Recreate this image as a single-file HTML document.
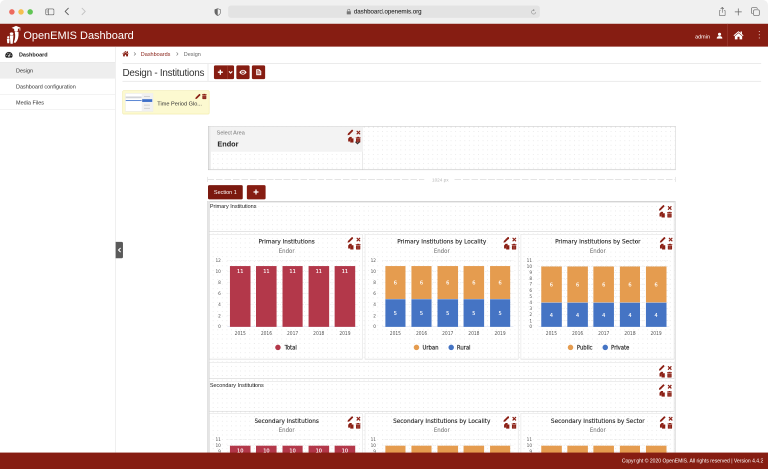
<!DOCTYPE html>
<html><head><meta charset="utf-8"><title>OpenEMIS Dashboard</title>
<style>
html,body{margin:0;padding:0;background:#fff;overflow:hidden}
body{width:768px;height:469px;position:relative;font-family:"Liberation Sans",Arial,sans-serif}
#outer{position:absolute;left:0;top:0;width:1536px;height:938px;transform:scale(0.5);transform-origin:0 0;will-change:transform;overflow:hidden;background:#fff}
#root{position:absolute;left:0;top:0;width:1680px;height:1026px;transform:scale(0.91428571);transform-origin:0 0;overflow:hidden;background:#fff;color:#333}
#root div,#root span{box-sizing:border-box}
.abs{position:absolute}
.w{position:absolute;border:1px solid #dadada;border-bottom-color:#c6c6c6;overflow:hidden}
.dots{background-image:radial-gradient(circle,#e8e8e8 0.8px,rgba(255,255,255,0) 1.25px);background-size:10px 10px;background-position:5px 5px}
.ct{position:absolute;left:0;right:0;text-align:center;font-family:'DejaVu Sans Condensed','DejaVu Sans','Liberation Sans',sans-serif;font-size:14px;color:#222;white-space:nowrap;-webkit-text-stroke:0.25px #222}
.cs{position:absolute;left:0;right:0;text-align:center;font-family:'DejaVu Sans Condensed','DejaVu Sans','Liberation Sans',sans-serif;font-size:13.200px;color:#666;white-space:nowrap}
.yl{position:absolute;left:0;text-align:right;font-family:'DejaVu Sans Condensed','DejaVu Sans','Liberation Sans',sans-serif;font-size:10.4px;color:#555;line-height:14px}
.xl{position:absolute;text-align:center;font-family:'DejaVu Sans Condensed','DejaVu Sans','Liberation Sans',sans-serif;font-size:10.7px;color:#555;line-height:14px}
.dl{position:absolute;text-align:center;font-family:'DejaVu Sans Condensed','DejaVu Sans','Liberation Sans',sans-serif;font-size:12.200px;color:#fff;line-height:14px;-webkit-text-stroke:0.250px #fff}
.lg{position:absolute;font-family:'DejaVu Sans Condensed','DejaVu Sans','Liberation Sans',sans-serif;font-size:13px;letter-spacing:-0.100px;-webkit-text-stroke:0.450px #333;color:#333;line-height:16px;white-space:nowrap}
.tw{font-size:12px;color:#222;padding:1px 1.500px;line-height:14px}
.btn{position:absolute;background:#861d12;border-radius:3px;color:#fff}
.sidet{position:absolute;font-size:12px;line-height:14px;color:#333;white-space:nowrap}
</style></head><body><div id="outer"><div id="root">

<div class="abs" style="left:0;top:0;width:1680px;height:52px;background:#f0f0f0;border-bottom:1px solid #d4d4d4;border-radius:11px 11px 0 0"></div>
<div class="abs" style="left:20px;top:20px;width:12.200px;height:12.200px;border-radius:6.100px;background:#ed6a5e"></div>
<div class="abs" style="left:40px;top:20px;width:12.200px;height:12.200px;border-radius:6.100px;background:#f5bf4f"></div>
<div class="abs" style="left:60px;top:20px;width:12.200px;height:12.200px;border-radius:6.100px;background:#61c554"></div>
<svg class="abs" style="left:98.500px;top:17.500px" width="20" height="16" viewBox="0 0 20 16"><rect x="1" y="1.5" width="18" height="13" rx="2.5" fill="none" stroke="#5e5e5e" stroke-width="1.4"/><path d="M7.2 1.5V14.5" stroke="#5e5e5e" stroke-width="1.4"/><path d="M3 5h2.4M3 7.5h2.4M3 10h2.4" stroke="#5e5e5e" stroke-width="1"/></svg>
<svg class="abs" style="left:140px;top:16px" width="12" height="18" viewBox="0 0 12 18"><path d="M9.5 2 L2.5 9 L9.5 16" fill="none" stroke="#5e5e5e" stroke-width="2" stroke-linecap="round" stroke-linejoin="round"/></svg>
<svg class="abs" style="left:177px;top:16px" width="12" height="18" viewBox="0 0 12 18"><path d="M2.5 2 L9.5 9 L2.5 16" fill="none" stroke="#c2c2c2" stroke-width="2" stroke-linecap="round" stroke-linejoin="round"/></svg>
<svg class="abs" style="left:469px;top:17.500px" width="14.500" height="17" viewBox="0 0 16 19"><path d="M8 1 L15 3.5 V9 Q15 15 8 18 Q1 15 1 9 V3.5 Z" fill="none" stroke="#666" stroke-width="1.5"/><path d="M8 1 L1 3.5 V9 Q1 15 8 18 Z" fill="#666"/></svg>
<div class="abs" style="left:499px;top:12px;width:682px;height:27px;border-radius:6px;background:#e3e3e3"></div>
<svg class="abs" style="left:758px;top:19px" width="10" height="13" viewBox="0 0 10 13"><rect x="0.5" y="5.5" width="9" height="7" rx="1" fill="#777"/><path d="M2.5 5.5V3.6Q2.5 1 5 1Q7.5 1 7.5 3.6V5.5" fill="none" stroke="#777" stroke-width="1.3"/></svg>
<div class="abs" style="left:774px;top:17px;font-size:13.4px;line-height:17px;color:#262626;white-space:nowrap;-webkit-text-stroke:0.2px #262626">dashboard.openemis.org</div>
<svg class="abs" style="left:1161px;top:18.500px" width="13" height="14" viewBox="0 0 16 17"><path d="M13.2 9.2 A5.4 5.4 0 1 1 8 3.6" fill="none" stroke="#777" stroke-width="1.3"/><path d="M7.2 0.8 L10.6 3.6 L7.2 6.4 Z" fill="#777"/></svg>
<svg class="abs" style="left:1571px;top:14px" width="18" height="23" viewBox="0 0 20 26"><path d="M6 9.5H4.5Q3 9.5 3 11V21.5Q3 23 4.5 23H15.5Q17 23 17 21.5V11Q17 9.5 15.5 9.5H14" fill="none" stroke="#666" stroke-width="1.5"/><path d="M10 15V2.5M6.3 5.8L10 2.2L13.7 5.8" fill="none" stroke="#666" stroke-width="1.5" stroke-linecap="round" stroke-linejoin="round"/></svg>
<svg class="abs" style="left:1606px;top:17px" width="18" height="18" viewBox="0 0 18 18"><path d="M9 2V16M2 9H16" stroke="#666" stroke-width="1.6" stroke-linecap="round"/></svg>
<svg class="abs" style="left:1642px;top:15px" width="21" height="21" viewBox="0 0 21 21"><rect x="6.5" y="6.5" width="12.5" height="12.5" rx="2.5" fill="#f0f0f0" stroke="#666" stroke-width="1.5"/><path d="M4.5 14.5H4Q1.8 14.5 1.8 12.3V4Q1.8 1.8 4 1.8H12.3Q14.5 1.8 14.5 4V4.5" fill="none" stroke="#666" stroke-width="1.5"/></svg>

<div class="abs" style="left:0;top:52px;width:1680px;height:50px;background:#861d12"></div>
<svg class="abs" style="left:13px;top:55px" width="33" height="42" viewBox="0 0 33 42">
<g fill="#fff">
<circle cx="5" cy="26.6" r="2.5"/><path d="M2 29.800H8L7 39.600H3Z"/>
<ellipse cx="12.3" cy="18.8" rx="3.9" ry="2.900"/><path d="M8.400 22.400H16.400L14.800 40.800H10Z"/>
<path d="M12.500 6L22 1.500L31.800 5.600L22 10.200Z"/><path d="M30.600 5.600V12" stroke="#fff" stroke-width="1.600"/>
<path d="M18 8.500H26.200V10.500Q26.200 14.400 22.100 14.400Q18 14.400 18 10.500Z"/>
<path d="M19.300 14.600L27.400 14.600Q28.800 31 20.600 38.800L17 38Q22 28 19.300 14.600Z"/>
</g></svg>
<div class="abs" style="left:51px;top:62px;font-size:24px;line-height:30px;color:#fff;white-space:nowrap">OpenEMIS Dashboard</div>
<div class="abs" style="left:1520.500px;top:71.500px;font-size:12px;line-height:16px;color:#fff">admin</div>
<svg class="abs" style="left:1567px;top:71px" width="14" height="14" viewBox="0 0 14 14"><circle cx="7" cy="4" r="3.4" fill="#fff"/><path d="M0.8 13.5Q0.8 8 7 8Q13.2 8 13.2 13.5Z" fill="#fff"/></svg>
<div class="abs" style="left:1591px;top:52px;width:1px;height:50px;background:#a34a40"></div>
<svg class="abs" style="left:1604px;top:67px" width="23" height="20" viewBox="0 0 23 20"><path d="M11.5 1L0.5 10.5L2 12L11.5 3.8L21 12L22.500 10.5L19 7.500V2H16V4.900Z" fill="#fff"/><path d="M11.5 5.500L3.500 12.400V19H9.300V13.500H13.700V19H19.500V12.400Z" fill="#fff"/></svg>
<div class="abs" style="left:1659.500px;top:67.5px;width:2.400px;height:2.400px;background:#fff;opacity:.85"></div>
<div class="abs" style="left:1659.500px;top:74.5px;width:2.400px;height:2.400px;background:#fff;opacity:.85"></div>
<div class="abs" style="left:1659.500px;top:81.5px;width:2.400px;height:2.400px;background:#fff;opacity:.85"></div>

<div class="abs" style="left:252px;top:102px;width:1px;height:888px;background:#dcdcdc"></div>
<div class="abs" style="left:0;top:136px;width:252px;height:36px;background:#eee"></div>
<div class="abs" style="left:0;top:136px;width:252px;height:1px;background:#e4e4e4"></div>
<div class="abs" style="left:0;top:205.500px;width:252px;height:1px;background:#e4e4e4"></div>
<div class="abs" style="left:0;top:239px;width:252px;height:1px;background:#e4e4e4"></div>
<div class="sidet" style="left:41.500px;top:113px;font-weight:bold;color:#222">Dashboard</div>
<svg class="abs" style="left:11px;top:113px" width="17" height="14" viewBox="0 0 17 14"><path d="M8.5 0.5A8 8 0 0 0 1.200 11.800Q1.600 13 2.800 13H14.200Q15.400 13 15.800 11.800A8 8 0 0 0 8.500 0.500Z" fill="#222"/><circle cx="8.5" cy="9.3" r="1.8" fill="#fff"/><path d="M8.5 9.300L11.800 4.200" stroke="#fff" stroke-width="1.400"/><circle cx="3.800" cy="8.500" r="1" fill="#fff"/><circle cx="5" cy="4.800" r="1" fill="#fff"/><circle cx="8.500" cy="3.300" r="1" fill="#fff"/><circle cx="13.200" cy="8.500" r="1" fill="#fff"/></svg>
<div class="sidet" style="left:35px;top:148.300px">Design</div>
<div class="sidet" style="left:35px;top:183.300px">Dashboard configuration</div>
<div class="sidet" style="left:35px;top:217.600px">Media Files</div>
<div class="abs" style="left:253px;top:529px;width:16px;height:35.500px;background:#5a5a5a;border-radius:0 3px 3px 0"></div>
<svg class="abs" style="left:256.500px;top:540.500px" width="9" height="12" viewBox="0 0 9 12"><path d="M6.800 1.500L2.300 6L6.800 10.500" fill="none" stroke="#fff" stroke-width="2.300"/></svg>


<svg class="abs" style="left:267px;top:111px" width="15" height="13" viewBox="0 0 23 20"><path d="M11.5 1L0.5 10.5L2 12L11.5 3.8L21 12L22.500 10.5L19 7.500V2H16V4.900Z" fill="#861d12"/><path d="M11.5 5.500L3.500 12.400V19H9.300V13.500H13.700V19H19.500V12.400Z" fill="#861d12"/></svg>
<svg class="abs" style="left:292px;top:114px" width="5.600" height="8" viewBox="0 0 7 10"><path d="M1.400 0.800L5.800 5L1.400 9.200" fill="none" stroke="#777" stroke-width="1.700"/></svg>
<div class="abs" style="left:308px;top:111px;font-size:12px;line-height:14px;color:#861d12">Dashboards</div>
<svg class="abs" style="left:384.500px;top:114px" width="5.600" height="8" viewBox="0 0 7 10"><path d="M1.400 0.800L5.800 5L1.400 9.200" fill="none" stroke="#777" stroke-width="1.700"/></svg>
<div class="abs" style="left:402px;top:111px;font-size:12px;line-height:14px;color:#666">Design</div>
<div class="abs" style="left:268px;top:138px;width:1397px;height:2px;background:#e9e9e9"></div>
<div class="abs" style="left:268px;top:177.300px;width:1397px;height:2px;background:#e9e9e9"></div>
<div class="abs" style="left:268px;top:146px;font-size:21.600px;letter-spacing:-0.520px;line-height:26px;color:#333;white-space:nowrap">Design - Institutions</div>
<div class="abs" style="left:453.500px;top:139px;width:2px;height:39px;background:#e9e9e9"></div>
<div class="btn" style="left:468px;top:143px;width:44px;height:30px"></div>
<div class="abs" style="left:496.500px;top:143px;width:1px;height:30px;background:#a8483d"></div>
<svg class="abs" style="left:476px;top:152px" width="12" height="12" viewBox="0 0 12 12"><path d="M6 0.500V11.500M0.500 6H11.500" stroke="#fff" stroke-width="3"/></svg>
<svg class="abs" style="left:500px;top:155px" width="9" height="7" viewBox="0 0 9 7"><path d="M0.800 1.200L4.500 4.900L8.200 1.200" fill="none" stroke="#fff" stroke-width="2.400"/></svg>
<div class="btn" style="left:517px;top:143px;width:29px;height:30px"></div>
<svg class="abs" style="left:523px;top:152px" width="17" height="12" viewBox="0 0 17 12"><path d="M0.500 6Q4 0.800 8.500 0.800Q13 0.800 16.500 6Q13 11.200 8.500 11.200Q4 11.200 0.500 6Z" fill="#fff"/><circle cx="8.500" cy="6" r="3.600" fill="#861d12"/><circle cx="8.500" cy="6" r="1.700" fill="#fff"/></svg>
<div class="btn" style="left:551px;top:143px;width:29px;height:30px"></div>
<svg class="abs" style="left:560px;top:151px" width="12" height="14" viewBox="0 0 12 14"><path d="M0.500 0.500H7.500L11.500 4.500V13.500H0.500Z" fill="#fff"/><path d="M2.500 6H9.500M2.500 8.300H9.500M2.500 10.600H9.500M2.500 3.600H6" stroke="#861d12" stroke-width="1.200"/></svg>

<div class="abs" style="left:268px;top:197.500px;width:190px;height:52.500px;background:#fcf9d0;border:1px solid #ebe38c;border-radius:2px"></div>
<div class="abs" style="left:274px;top:204px;width:60.500px;height:40px;background:#fff;border:1px solid #e4e4e4"></div>
<div class="abs" style="left:275px;top:211px;width:35px;height:4px;background:#d2d4d8"></div>
<div class="abs" style="left:275px;top:219px;width:35px;height:1.600px;background:#4a7bd0"></div>
<div class="abs" style="left:310px;top:205px;width:23.500px;height:38px;background:#f1f1f1"></div>
<div class="abs" style="left:315px;top:210px;width:13px;height:2px;background:#cfcfcf"></div>
<div class="abs" style="left:311px;top:217px;width:22px;height:5.500px;background:#3d6fc8"></div>
<div class="abs" style="left:315px;top:228.500px;width:13px;height:2px;background:#cfcfcf"></div>
<div class="abs" style="left:315px;top:236px;width:13px;height:2px;background:#cfcfcf"></div>
<div class="abs" style="left:344px;top:220px;font-size:12.200px;line-height:14px;color:#333;white-space:nowrap">Time Period Glo...</div>

<svg style="position:absolute;left:426.5px;top:205.0px" width="12" height="12" viewBox="0 0 12 12"><path d="M0.2 11.800L1.100 8.300L8.700 0.700Q9.300 0.200 9.900 0.700L11.300 2.100Q11.800 2.700 11.300 3.300L3.700 10.900Z" fill="#8b1f14"/></svg><svg style="position:absolute;left:441.0px;top:205.0px" width="12" height="12" viewBox="0 0 12 12"><path d="M1.100 1.300H4V0.200H8V1.300H10.900V2.800H1.100ZM1.700 3.500H10.300V10.800Q10.300 12 9.100 12H2.900Q1.700 12 1.700 10.800Z" fill="#8b1f14"/><path d="M4.200 4.800V10.600M6 4.800V10.600M7.800 4.800V10.600" stroke="#fff" stroke-opacity="0.300" stroke-width="0.700"/></svg>
<div class="w dots" style="left:455px;top:276px;width:1022.500px;height:96px;border-color:#bcbcbc;border-bottom-color:#adadad;border-right-color:#c8c8c8;background-position:5.700px 5.800px"></div>
<div class="abs" style="left:456px;top:277px;width:4.500px;height:94px;background:#e9e9e9"></div>
<div class="abs" style="left:455px;top:277px;width:338.500px;height:94px;border-right:1px solid #d2d2d2"></div>
<div class="abs" style="left:460.500px;top:277px;width:333px;height:54.500px;background:#f3f3f3"></div>
<div class="abs" style="left:474px;top:283.200px;font-size:12px;line-height:14px;color:#777">Select Area</div>
<div class="abs" style="left:475.500px;top:305.400px;font-size:16px;line-height:20px;color:#222;font-weight:bold">Endor</div>

<svg style="position:absolute;left:760.0px;top:283.4px" width="13.2" height="13.2" viewBox="0 0 12 12"><path d="M0.2 11.800L1.100 8.300L8.700 0.700Q9.300 0.200 9.900 0.700L11.300 2.100Q11.800 2.700 11.300 3.300L3.700 10.900Z" fill="#8b1f14"/></svg><svg style="position:absolute;left:778.0000000000001px;top:284.0px" width="12" height="12" viewBox="0 0 12 12"><path d="M2.300 2.300L9.700 9.700M9.700 2.300L2.300 9.700" stroke="#8b1f14" stroke-width="2.500" fill="none"/></svg><svg style="position:absolute;left:760.6px;top:298.6px" width="13" height="13" viewBox="0 0 12 12"><path d="M0.600 3.800L3.800 0.300H7.800V3.300H11.300V11.900H4.800V9.700H0.600Z" fill="#8b1f14"/><path d="M4.800 9.700V5.600L7 3.300" fill="none" stroke="#fff" stroke-opacity="0.35" stroke-width="0.700"/></svg><svg style="position:absolute;left:776.9000000000001px;top:298.6px" width="13" height="13" viewBox="0 0 12 12"><path d="M1.100 1.300H4V0.200H8V1.300H10.900V2.800H1.100ZM1.700 3.500H10.300V10.800Q10.300 12 9.100 12H2.900Q1.700 12 1.700 10.800Z" fill="#8b1f14"/><path d="M4.200 4.800V10.600M6 4.800V10.600M7.800 4.800V10.600" stroke="#fff" stroke-opacity="0.300" stroke-width="0.700"/></svg>
<svg class="abs" style="left:776px;top:308px" width="12" height="9" viewBox="0 0 12 9"><path d="M1.500 2L6 6.500L10.500 2" fill="none" stroke="#333" stroke-width="2.200"/></svg>
<div class="abs" style="left:454px;top:392px;width:474px;height:1px;background:repeating-linear-gradient(90deg,#c4c4c4 0 14.500px,rgba(255,255,255,0) 14.500px 18.500px)"></div><div class="abs" style="left:994px;top:392px;width:483px;height:1px;background:repeating-linear-gradient(90deg,#c4c4c4 0 14.500px,rgba(255,255,255,0) 14.500px 18.500px)"></div><div class="abs" style="left:454px;top:387px;width:1px;height:11px;background:#cfcfcf"></div><div class="abs" style="left:1477px;top:387px;width:1px;height:11px;background:#cfcfcf"></div><div class="abs" style="left:945px;top:388px;font-size:10.200px;line-height:12px;color:#b5b5b5;white-space:nowrap">1024 px</div>
<div class="btn" style="left:455px;top:405px;width:76px;height:30.500px;background:#7b190f;font-size:12px;line-height:30.500px;text-align:center">Section 1</div>
<div class="btn" style="left:539.500px;top:405px;width:41px;height:30.500px"></div>
<svg class="abs" style="left:554px;top:414px" width="12" height="12" viewBox="0 0 12 12"><path d="M6 0.500V11.500M0.500 6H11.500" stroke="#fff" stroke-width="2.700"/></svg>

<div class="abs dots" style="left:453px;top:439.500px;width:1025px;height:560px;border:1px solid #d4d4d4;border-top:2px solid #cdcdcd;border-bottom:none;background-position:-2.700px -5.500px"></div>
<div class="abs" style="left:453.500px;top:440px;width:5px;height:560px;background:#e6e6e6"></div>
<div class="abs" style="left:1475.500px;top:440px;width:2.500px;height:560px;background:#dedede"></div>
<div class="w tw" style="left:456.5px;top:442px;width:1018.700px;height:65px">Primary Institutions</div>
<svg style="position:absolute;left:1440.9px;top:448.09999999999997px" width="13.2" height="13.2" viewBox="0 0 12 12"><path d="M0.2 11.800L1.100 8.300L8.700 0.700Q9.300 0.200 9.900 0.700L11.300 2.100Q11.800 2.700 11.300 3.300L3.700 10.900Z" fill="#8b1f14"/></svg><svg style="position:absolute;left:1458.9px;top:448.7px" width="12" height="12" viewBox="0 0 12 12"><path d="M2.300 2.300L9.700 9.700M9.700 2.300L2.300 9.700" stroke="#8b1f14" stroke-width="2.500" fill="none"/></svg><svg style="position:absolute;left:1441.5px;top:463.3px" width="13" height="13" viewBox="0 0 12 12"><path d="M0.600 3.800L3.800 0.300H7.800V3.300H11.300V11.900H4.800V9.700H0.600Z" fill="#8b1f14"/><path d="M4.800 9.700V5.600L7 3.300" fill="none" stroke="#fff" stroke-opacity="0.35" stroke-width="0.700"/></svg><svg style="position:absolute;left:1457.8px;top:463.3px" width="13" height="13" viewBox="0 0 12 12"><path d="M1.100 1.300H4V0.200H8V1.300H10.900V2.800H1.100ZM1.700 3.500H10.300V10.800Q10.300 12 9.100 12H2.900Q1.700 12 1.700 10.800Z" fill="#8b1f14"/><path d="M4.200 4.800V10.600M6 4.800V10.600M7.800 4.800V10.600" stroke="#fff" stroke-opacity="0.300" stroke-width="0.700"/></svg>
<div class="w" style="left:456.50px;top:512px;width:336px;height:274px">
<div class="ct" style="top:7px;left:5px">Primary Institutions</div>
<div class="cs" style="top:28.2px;left:5px">Endor</div>
<div style="position:absolute;left:39.43px;width:286.25px;top:201.10px;height:1px;background:#ccd6eb"></div>
<div class="yl" style="top:193.80px;width:25.7px">0</div>
<div style="position:absolute;left:39.43px;width:286.25px;top:176.90px;height:1px;background:repeating-linear-gradient(90deg,#e0e0e0 0 3px,rgba(255,255,255,0) 3px 5px)"></div>
<div class="yl" style="top:169.60px;width:25.7px">2</div>
<div style="position:absolute;left:39.43px;width:286.25px;top:152.70px;height:1px;background:repeating-linear-gradient(90deg,#e0e0e0 0 3px,rgba(255,255,255,0) 3px 5px)"></div>
<div class="yl" style="top:145.40px;width:25.7px">4</div>
<div style="position:absolute;left:39.43px;width:286.25px;top:128.50px;height:1px;background:repeating-linear-gradient(90deg,#e0e0e0 0 3px,rgba(255,255,255,0) 3px 5px)"></div>
<div class="yl" style="top:121.20px;width:25.7px">6</div>
<div style="position:absolute;left:39.43px;width:286.25px;top:104.30px;height:1px;background:repeating-linear-gradient(90deg,#e0e0e0 0 3px,rgba(255,255,255,0) 3px 5px)"></div>
<div class="yl" style="top:97.00px;width:25.7px">8</div>
<div style="position:absolute;left:39.43px;width:286.25px;top:80.10px;height:1px;background:repeating-linear-gradient(90deg,#e0e0e0 0 3px,rgba(255,255,255,0) 3px 5px)"></div>
<div class="yl" style="top:72.80px;width:25.7px">10</div>
<div style="position:absolute;left:39.43px;width:286.25px;top:55.90px;height:1px;background:repeating-linear-gradient(90deg,#e0e0e0 0 3px,rgba(255,255,255,0) 3px 5px)"></div>
<div class="yl" style="top:48.60px;width:25.7px">12</div>
<div style="position:absolute;left:45.70px;top:68.50px;width:44.7px;height:133.10px;background:#b3384a"></div>
<div class="dl" style="left:45.70px;width:44.7px;top:73.00px">11</div>
<div class="xl" style="left:45.70px;width:44.7px;top:209.90px">2015</div>
<div style="position:absolute;left:102.95px;top:68.50px;width:44.7px;height:133.10px;background:#b3384a"></div>
<div class="dl" style="left:102.95px;width:44.7px;top:73.00px">11</div>
<div class="xl" style="left:102.95px;width:44.7px;top:209.90px">2016</div>
<div style="position:absolute;left:160.20px;top:68.50px;width:44.7px;height:133.10px;background:#b3384a"></div>
<div class="dl" style="left:160.20px;width:44.7px;top:73.00px">11</div>
<div class="xl" style="left:160.20px;width:44.7px;top:209.90px">2017</div>
<div style="position:absolute;left:217.45px;top:68.50px;width:44.7px;height:133.10px;background:#b3384a"></div>
<div class="dl" style="left:217.45px;width:44.7px;top:73.00px">11</div>
<div class="xl" style="left:217.45px;width:44.7px;top:209.90px">2018</div>
<div style="position:absolute;left:274.70px;top:68.50px;width:44.7px;height:133.10px;background:#b3384a"></div>
<div class="dl" style="left:274.70px;width:44.7px;top:73.00px">11</div>
<div class="xl" style="left:274.70px;width:44.7px;top:209.90px">2019</div>
<div style="position:absolute;left:144.8px;top:241.1px;width:12px;height:12px;border-radius:6px;background:#b3384a"></div>
<div class="lg" style="left:165.1px;top:240.3px">Total</div>
<svg style="position:absolute;left:302.4px;top:4.5px" width="13.2" height="13.2" viewBox="0 0 12 12"><path d="M0.2 11.800L1.100 8.300L8.700 0.700Q9.300 0.200 9.900 0.700L11.300 2.100Q11.800 2.700 11.300 3.300L3.700 10.900Z" fill="#8b1f14"/></svg><svg style="position:absolute;left:320.4px;top:5.1px" width="12" height="12" viewBox="0 0 12 12"><path d="M2.300 2.300L9.700 9.700M9.700 2.300L2.300 9.700" stroke="#8b1f14" stroke-width="2.500" fill="none"/></svg><svg style="position:absolute;left:303.0px;top:19.700000000000003px" width="13" height="13" viewBox="0 0 12 12"><path d="M0.600 3.800L3.800 0.300H7.800V3.300H11.300V11.900H4.800V9.700H0.600Z" fill="#8b1f14"/><path d="M4.800 9.700V5.600L7 3.300" fill="none" stroke="#fff" stroke-opacity="0.35" stroke-width="0.700"/></svg><svg style="position:absolute;left:319.3px;top:19.700000000000003px" width="13" height="13" viewBox="0 0 12 12"><path d="M1.100 1.300H4V0.200H8V1.300H10.900V2.800H1.100ZM1.700 3.500H10.300V10.800Q10.300 12 9.100 12H2.900Q1.700 12 1.700 10.800Z" fill="#8b1f14"/><path d="M4.200 4.800V10.600M6 4.800V10.600M7.800 4.800V10.600" stroke="#fff" stroke-opacity="0.300" stroke-width="0.700"/></svg>
</div>
<div class="w" style="left:797.83px;top:512px;width:336px;height:274px">
<div class="ct" style="top:7px;left:1px">Primary Institutions by Locality</div>
<div class="cs" style="top:28.2px;left:1px">Endor</div>
<div style="position:absolute;left:37.43px;width:286.25px;top:201.10px;height:1px;background:#ccd6eb"></div>
<div class="yl" style="top:193.80px;width:23.7px">0</div>
<div style="position:absolute;left:37.43px;width:286.25px;top:176.90px;height:1px;background:repeating-linear-gradient(90deg,#e0e0e0 0 3px,rgba(255,255,255,0) 3px 5px)"></div>
<div class="yl" style="top:169.60px;width:23.7px">2</div>
<div style="position:absolute;left:37.43px;width:286.25px;top:152.70px;height:1px;background:repeating-linear-gradient(90deg,#e0e0e0 0 3px,rgba(255,255,255,0) 3px 5px)"></div>
<div class="yl" style="top:145.40px;width:23.7px">4</div>
<div style="position:absolute;left:37.43px;width:286.25px;top:128.50px;height:1px;background:repeating-linear-gradient(90deg,#e0e0e0 0 3px,rgba(255,255,255,0) 3px 5px)"></div>
<div class="yl" style="top:121.20px;width:23.7px">6</div>
<div style="position:absolute;left:37.43px;width:286.25px;top:104.30px;height:1px;background:repeating-linear-gradient(90deg,#e0e0e0 0 3px,rgba(255,255,255,0) 3px 5px)"></div>
<div class="yl" style="top:97.00px;width:23.7px">8</div>
<div style="position:absolute;left:37.43px;width:286.25px;top:80.10px;height:1px;background:repeating-linear-gradient(90deg,#e0e0e0 0 3px,rgba(255,255,255,0) 3px 5px)"></div>
<div class="yl" style="top:72.80px;width:23.7px">10</div>
<div style="position:absolute;left:37.43px;width:286.25px;top:55.90px;height:1px;background:repeating-linear-gradient(90deg,#e0e0e0 0 3px,rgba(255,255,255,0) 3px 5px)"></div>
<div class="yl" style="top:48.60px;width:23.7px">12</div>
<div style="position:absolute;left:43.70px;top:68.50px;width:44.7px;height:72.60px;background:#e59c4f"></div>
<div class="dl" style="left:43.70px;width:44.7px;top:98.30px">6</div>
<div style="position:absolute;left:43.70px;top:141.10px;width:44.7px;height:60.50px;background:#4574c4"></div>
<div style="position:absolute;left:43.70px;top:140.60px;width:44.7px;height:1px;background:rgba(255,255,255,.55)"></div>
<div class="dl" style="left:43.70px;width:44.7px;top:164.85px">5</div>
<div class="xl" style="left:43.70px;width:44.7px;top:209.90px">2015</div>
<div style="position:absolute;left:100.95px;top:68.50px;width:44.7px;height:72.60px;background:#e59c4f"></div>
<div class="dl" style="left:100.95px;width:44.7px;top:98.30px">6</div>
<div style="position:absolute;left:100.95px;top:141.10px;width:44.7px;height:60.50px;background:#4574c4"></div>
<div style="position:absolute;left:100.95px;top:140.60px;width:44.7px;height:1px;background:rgba(255,255,255,.55)"></div>
<div class="dl" style="left:100.95px;width:44.7px;top:164.85px">5</div>
<div class="xl" style="left:100.95px;width:44.7px;top:209.90px">2016</div>
<div style="position:absolute;left:158.20px;top:68.50px;width:44.7px;height:72.60px;background:#e59c4f"></div>
<div class="dl" style="left:158.20px;width:44.7px;top:98.30px">6</div>
<div style="position:absolute;left:158.20px;top:141.10px;width:44.7px;height:60.50px;background:#4574c4"></div>
<div style="position:absolute;left:158.20px;top:140.60px;width:44.7px;height:1px;background:rgba(255,255,255,.55)"></div>
<div class="dl" style="left:158.20px;width:44.7px;top:164.85px">5</div>
<div class="xl" style="left:158.20px;width:44.7px;top:209.90px">2017</div>
<div style="position:absolute;left:215.45px;top:68.50px;width:44.7px;height:72.60px;background:#e59c4f"></div>
<div class="dl" style="left:215.45px;width:44.7px;top:98.30px">6</div>
<div style="position:absolute;left:215.45px;top:141.10px;width:44.7px;height:60.50px;background:#4574c4"></div>
<div style="position:absolute;left:215.45px;top:140.60px;width:44.7px;height:1px;background:rgba(255,255,255,.55)"></div>
<div class="dl" style="left:215.45px;width:44.7px;top:164.85px">5</div>
<div class="xl" style="left:215.45px;width:44.7px;top:209.90px">2018</div>
<div style="position:absolute;left:272.70px;top:68.50px;width:44.7px;height:72.60px;background:#e59c4f"></div>
<div class="dl" style="left:272.70px;width:44.7px;top:98.30px">6</div>
<div style="position:absolute;left:272.70px;top:141.10px;width:44.7px;height:60.50px;background:#4574c4"></div>
<div style="position:absolute;left:272.70px;top:140.60px;width:44.7px;height:1px;background:rgba(255,255,255,.55)"></div>
<div class="dl" style="left:272.70px;width:44.7px;top:164.85px">5</div>
<div class="xl" style="left:272.70px;width:44.7px;top:209.90px">2019</div>
<div style="position:absolute;left:106.3px;top:241.1px;width:12px;height:12px;border-radius:6px;background:#e59c4f"></div>
<div class="lg" style="left:125.4px;top:240.3px">Urban</div>
<div style="position:absolute;left:181.8px;top:241.1px;width:12px;height:12px;border-radius:6px;background:#4574c4"></div>
<div class="lg" style="left:200.7px;top:240.3px">Rural</div>
<svg style="position:absolute;left:302.4px;top:4.5px" width="13.2" height="13.2" viewBox="0 0 12 12"><path d="M0.2 11.800L1.100 8.300L8.700 0.700Q9.300 0.200 9.900 0.700L11.300 2.100Q11.800 2.700 11.300 3.300L3.700 10.900Z" fill="#8b1f14"/></svg><svg style="position:absolute;left:320.4px;top:5.1px" width="12" height="12" viewBox="0 0 12 12"><path d="M2.300 2.300L9.700 9.700M9.700 2.300L2.300 9.700" stroke="#8b1f14" stroke-width="2.500" fill="none"/></svg><svg style="position:absolute;left:303.0px;top:19.700000000000003px" width="13" height="13" viewBox="0 0 12 12"><path d="M0.600 3.800L3.800 0.300H7.800V3.300H11.300V11.900H4.800V9.700H0.600Z" fill="#8b1f14"/><path d="M4.800 9.700V5.600L7 3.300" fill="none" stroke="#fff" stroke-opacity="0.35" stroke-width="0.700"/></svg><svg style="position:absolute;left:319.3px;top:19.700000000000003px" width="13" height="13" viewBox="0 0 12 12"><path d="M1.100 1.300H4V0.200H8V1.300H10.900V2.800H1.100ZM1.700 3.500H10.300V10.800Q10.300 12 9.100 12H2.900Q1.700 12 1.700 10.800Z" fill="#8b1f14"/><path d="M4.200 4.800V10.600M6 4.800V10.600M7.800 4.800V10.600" stroke="#fff" stroke-opacity="0.300" stroke-width="0.700"/></svg>
</div>
<div class="w" style="left:1139.17px;top:512px;width:336px;height:274px">
<div class="ct" style="top:7px;left:1px">Primary Institutions by Sector</div>
<div class="cs" style="top:28.2px;left:1px">Endor</div>
<div style="position:absolute;left:37.43px;width:286.25px;top:201.10px;height:1px;background:#ccd6eb"></div>
<div class="yl" style="top:193.80px;width:23.7px">0</div>
<div style="position:absolute;left:37.43px;width:286.25px;top:187.90px;height:1px;background:repeating-linear-gradient(90deg,#e0e0e0 0 3px,rgba(255,255,255,0) 3px 5px)"></div>
<div class="yl" style="top:180.60px;width:23.7px">1</div>
<div style="position:absolute;left:37.43px;width:286.25px;top:174.70px;height:1px;background:repeating-linear-gradient(90deg,#e0e0e0 0 3px,rgba(255,255,255,0) 3px 5px)"></div>
<div class="yl" style="top:167.40px;width:23.7px">2</div>
<div style="position:absolute;left:37.43px;width:286.25px;top:161.50px;height:1px;background:repeating-linear-gradient(90deg,#e0e0e0 0 3px,rgba(255,255,255,0) 3px 5px)"></div>
<div class="yl" style="top:154.20px;width:23.7px">3</div>
<div style="position:absolute;left:37.43px;width:286.25px;top:148.30px;height:1px;background:repeating-linear-gradient(90deg,#e0e0e0 0 3px,rgba(255,255,255,0) 3px 5px)"></div>
<div class="yl" style="top:141.00px;width:23.7px">4</div>
<div style="position:absolute;left:37.43px;width:286.25px;top:135.10px;height:1px;background:repeating-linear-gradient(90deg,#e0e0e0 0 3px,rgba(255,255,255,0) 3px 5px)"></div>
<div class="yl" style="top:127.80px;width:23.7px">5</div>
<div style="position:absolute;left:37.43px;width:286.25px;top:121.90px;height:1px;background:repeating-linear-gradient(90deg,#e0e0e0 0 3px,rgba(255,255,255,0) 3px 5px)"></div>
<div class="yl" style="top:114.60px;width:23.7px">6</div>
<div style="position:absolute;left:37.43px;width:286.25px;top:108.70px;height:1px;background:repeating-linear-gradient(90deg,#e0e0e0 0 3px,rgba(255,255,255,0) 3px 5px)"></div>
<div class="yl" style="top:101.40px;width:23.7px">7</div>
<div style="position:absolute;left:37.43px;width:286.25px;top:95.50px;height:1px;background:repeating-linear-gradient(90deg,#e0e0e0 0 3px,rgba(255,255,255,0) 3px 5px)"></div>
<div class="yl" style="top:88.20px;width:23.7px">8</div>
<div style="position:absolute;left:37.43px;width:286.25px;top:82.30px;height:1px;background:repeating-linear-gradient(90deg,#e0e0e0 0 3px,rgba(255,255,255,0) 3px 5px)"></div>
<div class="yl" style="top:75.00px;width:23.7px">9</div>
<div style="position:absolute;left:37.43px;width:286.25px;top:69.10px;height:1px;background:repeating-linear-gradient(90deg,#e0e0e0 0 3px,rgba(255,255,255,0) 3px 5px)"></div>
<div class="yl" style="top:61.80px;width:23.7px">10</div>
<div style="position:absolute;left:37.43px;width:286.25px;top:55.90px;height:1px;background:repeating-linear-gradient(90deg,#e0e0e0 0 3px,rgba(255,255,255,0) 3px 5px)"></div>
<div class="yl" style="top:48.60px;width:23.7px">11</div>
<div style="position:absolute;left:43.70px;top:69.60px;width:44.7px;height:79.20px;background:#e59c4f"></div>
<div class="dl" style="left:43.70px;width:44.7px;top:102.70px">6</div>
<div style="position:absolute;left:43.70px;top:148.80px;width:44.7px;height:52.80px;background:#4574c4"></div>
<div style="position:absolute;left:43.70px;top:148.30px;width:44.7px;height:1px;background:rgba(255,255,255,.55)"></div>
<div class="dl" style="left:43.70px;width:44.7px;top:168.70px">4</div>
<div class="xl" style="left:43.70px;width:44.7px;top:209.90px">2015</div>
<div style="position:absolute;left:100.95px;top:69.60px;width:44.7px;height:79.20px;background:#e59c4f"></div>
<div class="dl" style="left:100.95px;width:44.7px;top:102.70px">6</div>
<div style="position:absolute;left:100.95px;top:148.80px;width:44.7px;height:52.80px;background:#4574c4"></div>
<div style="position:absolute;left:100.95px;top:148.30px;width:44.7px;height:1px;background:rgba(255,255,255,.55)"></div>
<div class="dl" style="left:100.95px;width:44.7px;top:168.70px">4</div>
<div class="xl" style="left:100.95px;width:44.7px;top:209.90px">2016</div>
<div style="position:absolute;left:158.20px;top:69.60px;width:44.7px;height:79.20px;background:#e59c4f"></div>
<div class="dl" style="left:158.20px;width:44.7px;top:102.70px">6</div>
<div style="position:absolute;left:158.20px;top:148.80px;width:44.7px;height:52.80px;background:#4574c4"></div>
<div style="position:absolute;left:158.20px;top:148.30px;width:44.7px;height:1px;background:rgba(255,255,255,.55)"></div>
<div class="dl" style="left:158.20px;width:44.7px;top:168.70px">4</div>
<div class="xl" style="left:158.20px;width:44.7px;top:209.90px">2017</div>
<div style="position:absolute;left:215.45px;top:69.60px;width:44.7px;height:79.20px;background:#e59c4f"></div>
<div class="dl" style="left:215.45px;width:44.7px;top:102.70px">6</div>
<div style="position:absolute;left:215.45px;top:148.80px;width:44.7px;height:52.80px;background:#4574c4"></div>
<div style="position:absolute;left:215.45px;top:148.30px;width:44.7px;height:1px;background:rgba(255,255,255,.55)"></div>
<div class="dl" style="left:215.45px;width:44.7px;top:168.70px">4</div>
<div class="xl" style="left:215.45px;width:44.7px;top:209.90px">2018</div>
<div style="position:absolute;left:272.70px;top:69.60px;width:44.7px;height:79.20px;background:#e59c4f"></div>
<div class="dl" style="left:272.70px;width:44.7px;top:102.70px">6</div>
<div style="position:absolute;left:272.70px;top:148.80px;width:44.7px;height:52.80px;background:#4574c4"></div>
<div style="position:absolute;left:272.70px;top:148.30px;width:44.7px;height:1px;background:rgba(255,255,255,.55)"></div>
<div class="dl" style="left:272.70px;width:44.7px;top:168.70px">4</div>
<div class="xl" style="left:272.70px;width:44.7px;top:209.90px">2019</div>
<div style="position:absolute;left:101.6px;top:241.1px;width:12px;height:12px;border-radius:6px;background:#e59c4f"></div>
<div class="lg" style="left:121.8px;top:240.3px">Public</div>
<div style="position:absolute;left:177.7px;top:241.1px;width:12px;height:12px;border-radius:6px;background:#4574c4"></div>
<div class="lg" style="left:196.4px;top:240.3px">Private</div>
<svg style="position:absolute;left:302.4px;top:4.5px" width="13.2" height="13.2" viewBox="0 0 12 12"><path d="M0.2 11.800L1.100 8.300L8.700 0.700Q9.300 0.200 9.900 0.700L11.300 2.100Q11.800 2.700 11.300 3.300L3.700 10.900Z" fill="#8b1f14"/></svg><svg style="position:absolute;left:320.4px;top:5.1px" width="12" height="12" viewBox="0 0 12 12"><path d="M2.300 2.300L9.700 9.700M9.700 2.300L2.300 9.700" stroke="#8b1f14" stroke-width="2.500" fill="none"/></svg><svg style="position:absolute;left:303.0px;top:19.700000000000003px" width="13" height="13" viewBox="0 0 12 12"><path d="M0.600 3.800L3.800 0.300H7.800V3.300H11.300V11.900H4.800V9.700H0.600Z" fill="#8b1f14"/><path d="M4.800 9.700V5.600L7 3.300" fill="none" stroke="#fff" stroke-opacity="0.35" stroke-width="0.700"/></svg><svg style="position:absolute;left:319.3px;top:19.700000000000003px" width="13" height="13" viewBox="0 0 12 12"><path d="M1.100 1.300H4V0.200H8V1.300H10.900V2.800H1.100ZM1.700 3.500H10.300V10.800Q10.300 12 9.100 12H2.900Q1.700 12 1.700 10.800Z" fill="#8b1f14"/><path d="M4.200 4.800V10.600M6 4.800V10.600M7.800 4.800V10.600" stroke="#fff" stroke-opacity="0.300" stroke-width="0.700"/></svg>
</div>
<div class="w" style="left:456.5px;top:791.500px;width:1018.700px;height:37.500px"></div>
<svg style="position:absolute;left:1440.9px;top:798.1px" width="13.2" height="13.2" viewBox="0 0 12 12"><path d="M0.2 11.800L1.100 8.300L8.700 0.700Q9.300 0.200 9.900 0.700L11.300 2.100Q11.800 2.700 11.300 3.300L3.700 10.900Z" fill="#8b1f14"/></svg><svg style="position:absolute;left:1458.9px;top:798.7px" width="12" height="12" viewBox="0 0 12 12"><path d="M2.300 2.300L9.700 9.700M9.700 2.300L2.300 9.700" stroke="#8b1f14" stroke-width="2.500" fill="none"/></svg><svg style="position:absolute;left:1441.5px;top:813.3px" width="13" height="13" viewBox="0 0 12 12"><path d="M0.600 3.800L3.800 0.300H7.800V3.300H11.300V11.900H4.800V9.700H0.600Z" fill="#8b1f14"/><path d="M4.800 9.700V5.600L7 3.300" fill="none" stroke="#fff" stroke-opacity="0.35" stroke-width="0.700"/></svg><svg style="position:absolute;left:1457.8px;top:813.3px" width="13" height="13" viewBox="0 0 12 12"><path d="M1.100 1.300H4V0.200H8V1.300H10.900V2.800H1.100ZM1.700 3.500H10.300V10.800Q10.300 12 9.100 12H2.900Q1.700 12 1.700 10.800Z" fill="#8b1f14"/><path d="M4.200 4.800V10.600M6 4.800V10.600M7.800 4.800V10.600" stroke="#fff" stroke-opacity="0.300" stroke-width="0.700"/></svg>
<div class="w tw" style="left:456.5px;top:833.500px;width:1018.700px;height:66px">Secondary Institutions</div>
<svg style="position:absolute;left:1440.9px;top:839.6px" width="13.2" height="13.2" viewBox="0 0 12 12"><path d="M0.2 11.800L1.100 8.300L8.700 0.700Q9.300 0.200 9.900 0.700L11.300 2.100Q11.800 2.700 11.300 3.300L3.700 10.900Z" fill="#8b1f14"/></svg><svg style="position:absolute;left:1458.9px;top:840.2px" width="12" height="12" viewBox="0 0 12 12"><path d="M2.300 2.300L9.700 9.700M9.700 2.300L2.300 9.700" stroke="#8b1f14" stroke-width="2.500" fill="none"/></svg><svg style="position:absolute;left:1441.5px;top:854.8px" width="13" height="13" viewBox="0 0 12 12"><path d="M0.600 3.800L3.800 0.300H7.800V3.300H11.300V11.900H4.800V9.700H0.600Z" fill="#8b1f14"/><path d="M4.800 9.700V5.600L7 3.300" fill="none" stroke="#fff" stroke-opacity="0.35" stroke-width="0.700"/></svg><svg style="position:absolute;left:1457.8px;top:854.8px" width="13" height="13" viewBox="0 0 12 12"><path d="M1.100 1.300H4V0.200H8V1.300H10.900V2.800H1.100ZM1.700 3.500H10.300V10.800Q10.300 12 9.100 12H2.900Q1.700 12 1.700 10.800Z" fill="#8b1f14"/><path d="M4.200 4.800V10.600M6 4.800V10.600M7.800 4.800V10.600" stroke="#fff" stroke-opacity="0.300" stroke-width="0.700"/></svg>
<div class="w" style="left:456.50px;top:904px;width:336px;height:274px">
<div class="ct" style="top:7px;left:5px">Secondary Institutions</div>
<div class="cs" style="top:28.2px;left:5px">Endor</div>
<div style="position:absolute;left:39.43px;width:286.25px;top:201.10px;height:1px;background:#ccd6eb"></div>
<div class="yl" style="top:193.80px;width:25.7px">0</div>
<div style="position:absolute;left:39.43px;width:286.25px;top:187.90px;height:1px;background:repeating-linear-gradient(90deg,#e0e0e0 0 3px,rgba(255,255,255,0) 3px 5px)"></div>
<div class="yl" style="top:180.60px;width:25.7px">1</div>
<div style="position:absolute;left:39.43px;width:286.25px;top:174.70px;height:1px;background:repeating-linear-gradient(90deg,#e0e0e0 0 3px,rgba(255,255,255,0) 3px 5px)"></div>
<div class="yl" style="top:167.40px;width:25.7px">2</div>
<div style="position:absolute;left:39.43px;width:286.25px;top:161.50px;height:1px;background:repeating-linear-gradient(90deg,#e0e0e0 0 3px,rgba(255,255,255,0) 3px 5px)"></div>
<div class="yl" style="top:154.20px;width:25.7px">3</div>
<div style="position:absolute;left:39.43px;width:286.25px;top:148.30px;height:1px;background:repeating-linear-gradient(90deg,#e0e0e0 0 3px,rgba(255,255,255,0) 3px 5px)"></div>
<div class="yl" style="top:141.00px;width:25.7px">4</div>
<div style="position:absolute;left:39.43px;width:286.25px;top:135.10px;height:1px;background:repeating-linear-gradient(90deg,#e0e0e0 0 3px,rgba(255,255,255,0) 3px 5px)"></div>
<div class="yl" style="top:127.80px;width:25.7px">5</div>
<div style="position:absolute;left:39.43px;width:286.25px;top:121.90px;height:1px;background:repeating-linear-gradient(90deg,#e0e0e0 0 3px,rgba(255,255,255,0) 3px 5px)"></div>
<div class="yl" style="top:114.60px;width:25.7px">6</div>
<div style="position:absolute;left:39.43px;width:286.25px;top:108.70px;height:1px;background:repeating-linear-gradient(90deg,#e0e0e0 0 3px,rgba(255,255,255,0) 3px 5px)"></div>
<div class="yl" style="top:101.40px;width:25.7px">7</div>
<div style="position:absolute;left:39.43px;width:286.25px;top:95.50px;height:1px;background:repeating-linear-gradient(90deg,#e0e0e0 0 3px,rgba(255,255,255,0) 3px 5px)"></div>
<div class="yl" style="top:88.20px;width:25.7px">8</div>
<div style="position:absolute;left:39.43px;width:286.25px;top:82.30px;height:1px;background:repeating-linear-gradient(90deg,#e0e0e0 0 3px,rgba(255,255,255,0) 3px 5px)"></div>
<div class="yl" style="top:75.00px;width:25.7px">9</div>
<div style="position:absolute;left:39.43px;width:286.25px;top:69.10px;height:1px;background:repeating-linear-gradient(90deg,#e0e0e0 0 3px,rgba(255,255,255,0) 3px 5px)"></div>
<div class="yl" style="top:61.80px;width:25.7px">10</div>
<div style="position:absolute;left:39.43px;width:286.25px;top:55.90px;height:1px;background:repeating-linear-gradient(90deg,#e0e0e0 0 3px,rgba(255,255,255,0) 3px 5px)"></div>
<div class="yl" style="top:48.60px;width:25.7px">11</div>
<div style="position:absolute;left:45.70px;top:69.60px;width:44.7px;height:132.00px;background:#b3384a"></div>
<div class="dl" style="left:45.70px;width:44.7px;top:74.10px">10</div>
<div class="xl" style="left:45.70px;width:44.7px;top:209.90px">2015</div>
<div style="position:absolute;left:102.95px;top:69.60px;width:44.7px;height:132.00px;background:#b3384a"></div>
<div class="dl" style="left:102.95px;width:44.7px;top:74.10px">10</div>
<div class="xl" style="left:102.95px;width:44.7px;top:209.90px">2016</div>
<div style="position:absolute;left:160.20px;top:69.60px;width:44.7px;height:132.00px;background:#b3384a"></div>
<div class="dl" style="left:160.20px;width:44.7px;top:74.10px">10</div>
<div class="xl" style="left:160.20px;width:44.7px;top:209.90px">2017</div>
<div style="position:absolute;left:217.45px;top:69.60px;width:44.7px;height:132.00px;background:#b3384a"></div>
<div class="dl" style="left:217.45px;width:44.7px;top:74.10px">10</div>
<div class="xl" style="left:217.45px;width:44.7px;top:209.90px">2018</div>
<div style="position:absolute;left:274.70px;top:69.60px;width:44.7px;height:132.00px;background:#b3384a"></div>
<div class="dl" style="left:274.70px;width:44.7px;top:74.10px">10</div>
<div class="xl" style="left:274.70px;width:44.7px;top:209.90px">2019</div>
<svg style="position:absolute;left:302.4px;top:4.5px" width="13.2" height="13.2" viewBox="0 0 12 12"><path d="M0.2 11.800L1.100 8.300L8.700 0.700Q9.300 0.200 9.900 0.700L11.300 2.100Q11.800 2.700 11.300 3.300L3.700 10.900Z" fill="#8b1f14"/></svg><svg style="position:absolute;left:320.4px;top:5.1px" width="12" height="12" viewBox="0 0 12 12"><path d="M2.300 2.300L9.700 9.700M9.700 2.300L2.300 9.700" stroke="#8b1f14" stroke-width="2.500" fill="none"/></svg><svg style="position:absolute;left:303.0px;top:19.700000000000003px" width="13" height="13" viewBox="0 0 12 12"><path d="M0.600 3.800L3.800 0.300H7.800V3.300H11.300V11.900H4.800V9.700H0.600Z" fill="#8b1f14"/><path d="M4.800 9.700V5.600L7 3.300" fill="none" stroke="#fff" stroke-opacity="0.35" stroke-width="0.700"/></svg><svg style="position:absolute;left:319.3px;top:19.700000000000003px" width="13" height="13" viewBox="0 0 12 12"><path d="M1.100 1.300H4V0.200H8V1.300H10.900V2.800H1.100ZM1.700 3.500H10.300V10.800Q10.300 12 9.100 12H2.900Q1.700 12 1.700 10.800Z" fill="#8b1f14"/><path d="M4.200 4.800V10.600M6 4.800V10.600M7.800 4.800V10.600" stroke="#fff" stroke-opacity="0.300" stroke-width="0.700"/></svg>
</div>
<div class="w" style="left:797.83px;top:904px;width:336px;height:274px">
<div class="ct" style="top:7px;left:1px">Secondary Institutions by Locality</div>
<div class="cs" style="top:28.2px;left:1px">Endor</div>
<div style="position:absolute;left:37.43px;width:286.25px;top:201.10px;height:1px;background:#ccd6eb"></div>
<div class="yl" style="top:193.80px;width:23.7px">0</div>
<div style="position:absolute;left:37.43px;width:286.25px;top:187.90px;height:1px;background:repeating-linear-gradient(90deg,#e0e0e0 0 3px,rgba(255,255,255,0) 3px 5px)"></div>
<div class="yl" style="top:180.60px;width:23.7px">1</div>
<div style="position:absolute;left:37.43px;width:286.25px;top:174.70px;height:1px;background:repeating-linear-gradient(90deg,#e0e0e0 0 3px,rgba(255,255,255,0) 3px 5px)"></div>
<div class="yl" style="top:167.40px;width:23.7px">2</div>
<div style="position:absolute;left:37.43px;width:286.25px;top:161.50px;height:1px;background:repeating-linear-gradient(90deg,#e0e0e0 0 3px,rgba(255,255,255,0) 3px 5px)"></div>
<div class="yl" style="top:154.20px;width:23.7px">3</div>
<div style="position:absolute;left:37.43px;width:286.25px;top:148.30px;height:1px;background:repeating-linear-gradient(90deg,#e0e0e0 0 3px,rgba(255,255,255,0) 3px 5px)"></div>
<div class="yl" style="top:141.00px;width:23.7px">4</div>
<div style="position:absolute;left:37.43px;width:286.25px;top:135.10px;height:1px;background:repeating-linear-gradient(90deg,#e0e0e0 0 3px,rgba(255,255,255,0) 3px 5px)"></div>
<div class="yl" style="top:127.80px;width:23.7px">5</div>
<div style="position:absolute;left:37.43px;width:286.25px;top:121.90px;height:1px;background:repeating-linear-gradient(90deg,#e0e0e0 0 3px,rgba(255,255,255,0) 3px 5px)"></div>
<div class="yl" style="top:114.60px;width:23.7px">6</div>
<div style="position:absolute;left:37.43px;width:286.25px;top:108.70px;height:1px;background:repeating-linear-gradient(90deg,#e0e0e0 0 3px,rgba(255,255,255,0) 3px 5px)"></div>
<div class="yl" style="top:101.40px;width:23.7px">7</div>
<div style="position:absolute;left:37.43px;width:286.25px;top:95.50px;height:1px;background:repeating-linear-gradient(90deg,#e0e0e0 0 3px,rgba(255,255,255,0) 3px 5px)"></div>
<div class="yl" style="top:88.20px;width:23.7px">8</div>
<div style="position:absolute;left:37.43px;width:286.25px;top:82.30px;height:1px;background:repeating-linear-gradient(90deg,#e0e0e0 0 3px,rgba(255,255,255,0) 3px 5px)"></div>
<div class="yl" style="top:75.00px;width:23.7px">9</div>
<div style="position:absolute;left:37.43px;width:286.25px;top:69.10px;height:1px;background:repeating-linear-gradient(90deg,#e0e0e0 0 3px,rgba(255,255,255,0) 3px 5px)"></div>
<div class="yl" style="top:61.80px;width:23.7px">10</div>
<div style="position:absolute;left:37.43px;width:286.25px;top:55.90px;height:1px;background:repeating-linear-gradient(90deg,#e0e0e0 0 3px,rgba(255,255,255,0) 3px 5px)"></div>
<div class="yl" style="top:48.60px;width:23.7px">11</div>
<div style="position:absolute;left:43.70px;top:69.60px;width:44.7px;height:66.00px;background:#e59c4f"></div>
<div class="dl" style="left:43.70px;width:44.7px;top:96.10px">5</div>
<div style="position:absolute;left:43.70px;top:135.60px;width:44.7px;height:66.00px;background:#4574c4"></div>
<div style="position:absolute;left:43.70px;top:135.10px;width:44.7px;height:1px;background:rgba(255,255,255,.55)"></div>
<div class="dl" style="left:43.70px;width:44.7px;top:162.10px">5</div>
<div class="xl" style="left:43.70px;width:44.7px;top:209.90px">2015</div>
<div style="position:absolute;left:100.95px;top:69.60px;width:44.7px;height:66.00px;background:#e59c4f"></div>
<div class="dl" style="left:100.95px;width:44.7px;top:96.10px">5</div>
<div style="position:absolute;left:100.95px;top:135.60px;width:44.7px;height:66.00px;background:#4574c4"></div>
<div style="position:absolute;left:100.95px;top:135.10px;width:44.7px;height:1px;background:rgba(255,255,255,.55)"></div>
<div class="dl" style="left:100.95px;width:44.7px;top:162.10px">5</div>
<div class="xl" style="left:100.95px;width:44.7px;top:209.90px">2016</div>
<div style="position:absolute;left:158.20px;top:69.60px;width:44.7px;height:66.00px;background:#e59c4f"></div>
<div class="dl" style="left:158.20px;width:44.7px;top:96.10px">5</div>
<div style="position:absolute;left:158.20px;top:135.60px;width:44.7px;height:66.00px;background:#4574c4"></div>
<div style="position:absolute;left:158.20px;top:135.10px;width:44.7px;height:1px;background:rgba(255,255,255,.55)"></div>
<div class="dl" style="left:158.20px;width:44.7px;top:162.10px">5</div>
<div class="xl" style="left:158.20px;width:44.7px;top:209.90px">2017</div>
<div style="position:absolute;left:215.45px;top:69.60px;width:44.7px;height:66.00px;background:#e59c4f"></div>
<div class="dl" style="left:215.45px;width:44.7px;top:96.10px">5</div>
<div style="position:absolute;left:215.45px;top:135.60px;width:44.7px;height:66.00px;background:#4574c4"></div>
<div style="position:absolute;left:215.45px;top:135.10px;width:44.7px;height:1px;background:rgba(255,255,255,.55)"></div>
<div class="dl" style="left:215.45px;width:44.7px;top:162.10px">5</div>
<div class="xl" style="left:215.45px;width:44.7px;top:209.90px">2018</div>
<div style="position:absolute;left:272.70px;top:69.60px;width:44.7px;height:66.00px;background:#e59c4f"></div>
<div class="dl" style="left:272.70px;width:44.7px;top:96.10px">5</div>
<div style="position:absolute;left:272.70px;top:135.60px;width:44.7px;height:66.00px;background:#4574c4"></div>
<div style="position:absolute;left:272.70px;top:135.10px;width:44.7px;height:1px;background:rgba(255,255,255,.55)"></div>
<div class="dl" style="left:272.70px;width:44.7px;top:162.10px">5</div>
<div class="xl" style="left:272.70px;width:44.7px;top:209.90px">2019</div>
<svg style="position:absolute;left:302.4px;top:4.5px" width="13.2" height="13.2" viewBox="0 0 12 12"><path d="M0.2 11.800L1.100 8.300L8.700 0.700Q9.300 0.200 9.900 0.700L11.300 2.100Q11.800 2.700 11.300 3.300L3.700 10.900Z" fill="#8b1f14"/></svg><svg style="position:absolute;left:320.4px;top:5.1px" width="12" height="12" viewBox="0 0 12 12"><path d="M2.300 2.300L9.700 9.700M9.700 2.300L2.300 9.700" stroke="#8b1f14" stroke-width="2.500" fill="none"/></svg><svg style="position:absolute;left:303.0px;top:19.700000000000003px" width="13" height="13" viewBox="0 0 12 12"><path d="M0.600 3.800L3.800 0.300H7.800V3.300H11.300V11.900H4.800V9.700H0.600Z" fill="#8b1f14"/><path d="M4.800 9.700V5.600L7 3.300" fill="none" stroke="#fff" stroke-opacity="0.35" stroke-width="0.700"/></svg><svg style="position:absolute;left:319.3px;top:19.700000000000003px" width="13" height="13" viewBox="0 0 12 12"><path d="M1.100 1.300H4V0.200H8V1.300H10.900V2.800H1.100ZM1.700 3.500H10.300V10.800Q10.300 12 9.100 12H2.900Q1.700 12 1.700 10.800Z" fill="#8b1f14"/><path d="M4.200 4.800V10.600M6 4.800V10.600M7.800 4.800V10.600" stroke="#fff" stroke-opacity="0.300" stroke-width="0.700"/></svg>
</div>
<div class="w" style="left:1139.17px;top:904px;width:336px;height:274px">
<div class="ct" style="top:7px;left:1px">Secondary Institutions by Sector</div>
<div class="cs" style="top:28.2px;left:1px">Endor</div>
<div style="position:absolute;left:37.43px;width:286.25px;top:201.10px;height:1px;background:#ccd6eb"></div>
<div class="yl" style="top:193.80px;width:23.7px">0</div>
<div style="position:absolute;left:37.43px;width:286.25px;top:187.90px;height:1px;background:repeating-linear-gradient(90deg,#e0e0e0 0 3px,rgba(255,255,255,0) 3px 5px)"></div>
<div class="yl" style="top:180.60px;width:23.7px">1</div>
<div style="position:absolute;left:37.43px;width:286.25px;top:174.70px;height:1px;background:repeating-linear-gradient(90deg,#e0e0e0 0 3px,rgba(255,255,255,0) 3px 5px)"></div>
<div class="yl" style="top:167.40px;width:23.7px">2</div>
<div style="position:absolute;left:37.43px;width:286.25px;top:161.50px;height:1px;background:repeating-linear-gradient(90deg,#e0e0e0 0 3px,rgba(255,255,255,0) 3px 5px)"></div>
<div class="yl" style="top:154.20px;width:23.7px">3</div>
<div style="position:absolute;left:37.43px;width:286.25px;top:148.30px;height:1px;background:repeating-linear-gradient(90deg,#e0e0e0 0 3px,rgba(255,255,255,0) 3px 5px)"></div>
<div class="yl" style="top:141.00px;width:23.7px">4</div>
<div style="position:absolute;left:37.43px;width:286.25px;top:135.10px;height:1px;background:repeating-linear-gradient(90deg,#e0e0e0 0 3px,rgba(255,255,255,0) 3px 5px)"></div>
<div class="yl" style="top:127.80px;width:23.7px">5</div>
<div style="position:absolute;left:37.43px;width:286.25px;top:121.90px;height:1px;background:repeating-linear-gradient(90deg,#e0e0e0 0 3px,rgba(255,255,255,0) 3px 5px)"></div>
<div class="yl" style="top:114.60px;width:23.7px">6</div>
<div style="position:absolute;left:37.43px;width:286.25px;top:108.70px;height:1px;background:repeating-linear-gradient(90deg,#e0e0e0 0 3px,rgba(255,255,255,0) 3px 5px)"></div>
<div class="yl" style="top:101.40px;width:23.7px">7</div>
<div style="position:absolute;left:37.43px;width:286.25px;top:95.50px;height:1px;background:repeating-linear-gradient(90deg,#e0e0e0 0 3px,rgba(255,255,255,0) 3px 5px)"></div>
<div class="yl" style="top:88.20px;width:23.7px">8</div>
<div style="position:absolute;left:37.43px;width:286.25px;top:82.30px;height:1px;background:repeating-linear-gradient(90deg,#e0e0e0 0 3px,rgba(255,255,255,0) 3px 5px)"></div>
<div class="yl" style="top:75.00px;width:23.7px">9</div>
<div style="position:absolute;left:37.43px;width:286.25px;top:69.10px;height:1px;background:repeating-linear-gradient(90deg,#e0e0e0 0 3px,rgba(255,255,255,0) 3px 5px)"></div>
<div class="yl" style="top:61.80px;width:23.7px">10</div>
<div style="position:absolute;left:37.43px;width:286.25px;top:55.90px;height:1px;background:repeating-linear-gradient(90deg,#e0e0e0 0 3px,rgba(255,255,255,0) 3px 5px)"></div>
<div class="yl" style="top:48.60px;width:23.7px">11</div>
<div style="position:absolute;left:43.70px;top:69.60px;width:44.7px;height:66.00px;background:#e59c4f"></div>
<div class="dl" style="left:43.70px;width:44.7px;top:96.10px">5</div>
<div style="position:absolute;left:43.70px;top:135.60px;width:44.7px;height:66.00px;background:#4574c4"></div>
<div style="position:absolute;left:43.70px;top:135.10px;width:44.7px;height:1px;background:rgba(255,255,255,.55)"></div>
<div class="dl" style="left:43.70px;width:44.7px;top:162.10px">5</div>
<div class="xl" style="left:43.70px;width:44.7px;top:209.90px">2015</div>
<div style="position:absolute;left:100.95px;top:69.60px;width:44.7px;height:66.00px;background:#e59c4f"></div>
<div class="dl" style="left:100.95px;width:44.7px;top:96.10px">5</div>
<div style="position:absolute;left:100.95px;top:135.60px;width:44.7px;height:66.00px;background:#4574c4"></div>
<div style="position:absolute;left:100.95px;top:135.10px;width:44.7px;height:1px;background:rgba(255,255,255,.55)"></div>
<div class="dl" style="left:100.95px;width:44.7px;top:162.10px">5</div>
<div class="xl" style="left:100.95px;width:44.7px;top:209.90px">2016</div>
<div style="position:absolute;left:158.20px;top:69.60px;width:44.7px;height:66.00px;background:#e59c4f"></div>
<div class="dl" style="left:158.20px;width:44.7px;top:96.10px">5</div>
<div style="position:absolute;left:158.20px;top:135.60px;width:44.7px;height:66.00px;background:#4574c4"></div>
<div style="position:absolute;left:158.20px;top:135.10px;width:44.7px;height:1px;background:rgba(255,255,255,.55)"></div>
<div class="dl" style="left:158.20px;width:44.7px;top:162.10px">5</div>
<div class="xl" style="left:158.20px;width:44.7px;top:209.90px">2017</div>
<div style="position:absolute;left:215.45px;top:69.60px;width:44.7px;height:66.00px;background:#e59c4f"></div>
<div class="dl" style="left:215.45px;width:44.7px;top:96.10px">5</div>
<div style="position:absolute;left:215.45px;top:135.60px;width:44.7px;height:66.00px;background:#4574c4"></div>
<div style="position:absolute;left:215.45px;top:135.10px;width:44.7px;height:1px;background:rgba(255,255,255,.55)"></div>
<div class="dl" style="left:215.45px;width:44.7px;top:162.10px">5</div>
<div class="xl" style="left:215.45px;width:44.7px;top:209.90px">2018</div>
<div style="position:absolute;left:272.70px;top:69.60px;width:44.7px;height:66.00px;background:#e59c4f"></div>
<div class="dl" style="left:272.70px;width:44.7px;top:96.10px">5</div>
<div style="position:absolute;left:272.70px;top:135.60px;width:44.7px;height:66.00px;background:#4574c4"></div>
<div style="position:absolute;left:272.70px;top:135.10px;width:44.7px;height:1px;background:rgba(255,255,255,.55)"></div>
<div class="dl" style="left:272.70px;width:44.7px;top:162.10px">5</div>
<div class="xl" style="left:272.70px;width:44.7px;top:209.90px">2019</div>
<svg style="position:absolute;left:302.4px;top:4.5px" width="13.2" height="13.2" viewBox="0 0 12 12"><path d="M0.2 11.800L1.100 8.300L8.700 0.700Q9.300 0.200 9.900 0.700L11.300 2.100Q11.800 2.700 11.300 3.300L3.700 10.900Z" fill="#8b1f14"/></svg><svg style="position:absolute;left:320.4px;top:5.1px" width="12" height="12" viewBox="0 0 12 12"><path d="M2.300 2.300L9.700 9.700M9.700 2.300L2.300 9.700" stroke="#8b1f14" stroke-width="2.500" fill="none"/></svg><svg style="position:absolute;left:303.0px;top:19.700000000000003px" width="13" height="13" viewBox="0 0 12 12"><path d="M0.600 3.800L3.800 0.300H7.800V3.300H11.300V11.900H4.800V9.700H0.600Z" fill="#8b1f14"/><path d="M4.800 9.700V5.600L7 3.300" fill="none" stroke="#fff" stroke-opacity="0.35" stroke-width="0.700"/></svg><svg style="position:absolute;left:319.3px;top:19.700000000000003px" width="13" height="13" viewBox="0 0 12 12"><path d="M1.100 1.300H4V0.200H8V1.300H10.900V2.800H1.100ZM1.700 3.500H10.300V10.800Q10.300 12 9.100 12H2.900Q1.700 12 1.700 10.800Z" fill="#8b1f14"/><path d="M4.200 4.800V10.600M6 4.800V10.600M7.800 4.800V10.600" stroke="#fff" stroke-opacity="0.300" stroke-width="0.700"/></svg>
</div>
<div class="abs" style="left:0;top:989.500px;width:1680px;height:37px;background:#861d12"></div>
<div class="abs" style="right:10.400px;top:1001px;font-size:11px;line-height:14px;color:#fff;white-space:nowrap">Copyright © 2020 OpenEMIS. All rights reserved | Version 4.4.2</div>

</div></div></body></html>
